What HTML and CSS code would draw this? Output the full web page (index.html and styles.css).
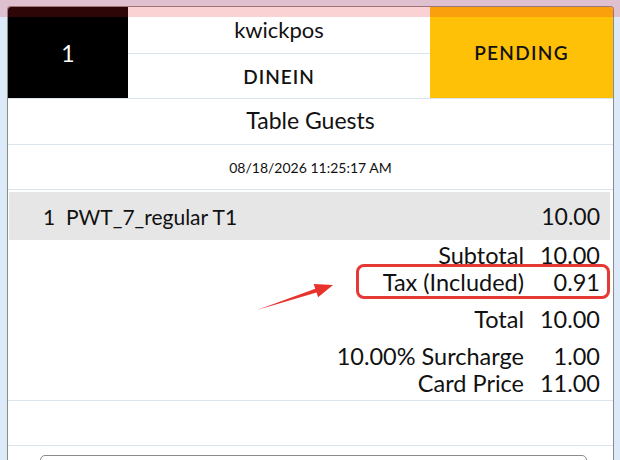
FILE: index.html
```html
<!DOCTYPE html>
<html>
<head>
<meta charset="utf-8">
<link rel="stylesheet" href="styles.css">
</head>
<body>
<div class="page">
  <div class="card">
    <div class="head">
      <div class="num">1</div>
      <div class="mid">
        <div class="store">kwickpos</div>
        <div class="type">DINEIN</div>
      </div>
      <div class="status">PENDING</div>
    </div>
    <div class="row guests">Table Guests</div>
    <div class="row date">08/18/2026 11:25:17 AM</div>
    <div class="item">
      <span class="qty">1</span>
      <span class="name">PWT_7_regular T1</span>
      <span class="amt">10.00</span>
    </div>
    <div class="totals">
      <div class="tl t-sub"><span class="lbl">Subtotal</span><span class="val">10.00</span></div>
      <div class="tl t-tax"><span class="lbl">Tax (Included)</span><span class="val">0.91</span></div>
      <div class="tl t-total"><span class="lbl">Total</span><span class="val">10.00</span></div>
      <div class="tl t-sur"><span class="lbl">10.00% Surcharge</span><span class="val">1.00</span></div>
      <div class="tl t-card"><span class="lbl">Card Price</span><span class="val">11.00</span></div>
    </div>
    <div class="blank"></div>
    <div class="footer"><div class="input"></div></div>
  </div>
  <div class="highlight"></div>
  <svg class="arrow" width="620" height="460" viewBox="0 0 620 460">
    <polygon points="257,310 315.3,288.7 313.7,283.9 333,285 318.1,297.3 316.5,292.5" fill="#e8322c"/>
  </svg>
  <div class="tint"></div>
</div>
</body>
</html>
```

FILE: styles.css
```css
html, body {
  margin: 0;
  padding: 0;
  background: #dbe9f8;
  font-family: "Lato", "Noto Sans", sans-serif;
  color: #111;
}
.page {
  position: relative;
  width: 620px;
  height: 460px;
  overflow: hidden;
}
.card {
  margin: 6px 6px 0 7px;
  background: #fff;
  border: 1px solid #8b8b8b;
  border-bottom: none;
  border-radius: 4px 4px 0 0;
  height: 460px;
  overflow: hidden;
}
.head {
  display: grid;
  grid-template-columns: 120px 1fr 183px;
  height: 91px;
  border-bottom: 1px solid #dae6ef;
}
.num {
  background: #000;
  color: #fff;
  font-size: 23px;
  display: flex;
  align-items: center;
  justify-content: center;
}
.mid {
  display: flex;
  flex-direction: column;
}
.store, .type {
  flex: 1;
  display: flex;
  align-items: center;
  justify-content: center;
}
.store { font-size: 22px; border-bottom: 1px solid #dae6ef; padding-bottom: 2px; }
.type { font-size: 19px; font-weight: 600; letter-spacing: 1px; }
.status {
  background: #ffc107;
  font-size: 19px;
  font-weight: 600;
  letter-spacing: 1.3px;
  display: flex;
  align-items: center;
  justify-content: center;
}
.row {
  display: flex;
  align-items: center;
  justify-content: center;
  border-bottom: 1px solid #dae6ef;
}
.guests { height: 46px; font-size: 23px; padding-bottom: 3px; box-sizing: border-box; }
.date { height: 44px; font-size: 14px; }
.item {
  margin: 2px 3px 0 1px;
  height: 48px;
  background: #e6e6e6;
  display: flex;
  align-items: center;
  font-size: 21px;
  padding: 0 10px 0 34px;
}
.qty { width: 23px; }
.name { flex: 1; }
.amt { font-size: 23px; }
.totals {
  padding: 0 13px 4px 0;
  border-bottom: 1px solid #dae6ef;
  font-size: 23.5px;
}
.tl {
  display: flex;
  justify-content: flex-end;
  align-items: center;
  height: 27px;
}
.val { width: 76px; text-align: right; }
.t-sub { margin-top: 1px; }
.t-tax { height: 28px; }
.t-total { margin-top: 9px; height: 28px; }
.t-sur { margin-top: 9px; height: 28px; }
.t-card { height: 26px; }
.blank {
  height: 44px;
  border-bottom: 1px solid #dae6ef;
}
.footer { padding: 9px 26px 0 32px; }
.input {
  height: 30px;
  border: 1px solid #8b8b8b;
  border-radius: 5px;
}
.highlight {
  position: absolute;
  left: 356px;
  top: 264px;
  width: 248px;
  height: 29px;
  border: 3px solid #e53935;
  border-radius: 8px;
}
.arrow {
  position: absolute;
  left: 0;
  top: 0;
  pointer-events: none;
}
.tint {
  position: absolute;
  left: 0;
  top: 0;
  width: 620px;
  height: 17px;
  background: rgba(235, 30, 40, 0.2);
}
```
